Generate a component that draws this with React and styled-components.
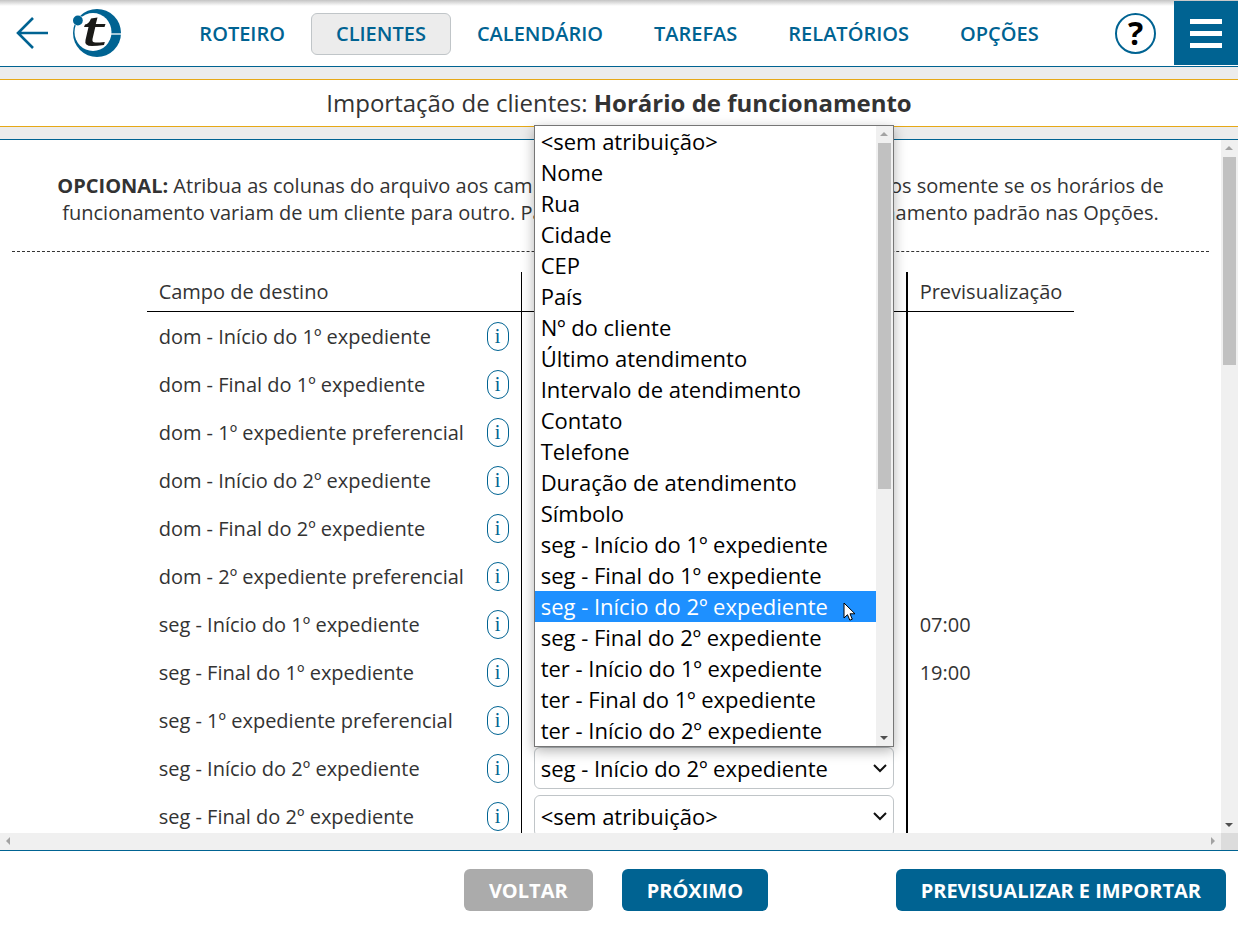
import styled, { createGlobalStyle } from 'styled-components';

const menu = ['ROTEIRO', 'CLIENTES', 'CALENDÁRIO', 'TAREFAS', 'RELATÓRIOS', 'OPÇÕES'];

const NONE = '<sem atribuição>';

const columns = [
  NONE,
  'Nome',
  'Rua',
  'Cidade',
  'CEP',
  'País',
  'Nº do cliente',
  'Último atendimento',
  'Intervalo de atendimento',
  'Contato',
  'Telefone',
  'Duração de atendimento',
  'Símbolo',
  'seg - Início do 1º expediente',
  'seg - Final do 1º expediente',
  'seg - Início do 2º expediente',
  'seg - Final do 2º expediente',
  'ter - Início do 1º expediente',
  'ter - Final do 1º expediente',
  'ter - Início do 2º expediente',
];

const fields = [
  { name: 'dom - Início do 1º expediente', value: NONE },
  { name: 'dom - Final do 1º expediente', value: NONE },
  { name: 'dom - 1º expediente preferencial', value: NONE },
  { name: 'dom - Início do 2º expediente', value: NONE },
  { name: 'dom - Final do 2º expediente', value: NONE },
  { name: 'dom - 2º expediente preferencial', value: NONE },
  { name: 'seg - Início do 1º expediente', value: 'seg - Início do 1º expediente', preview: '07:00' },
  { name: 'seg - Final do 1º expediente', value: 'seg - Final do 1º expediente', preview: '19:00' },
  { name: 'seg - 1º expediente preferencial', value: NONE },
  { name: 'seg - Início do 2º expediente', value: 'seg - Início do 2º expediente', open: true },
  { name: 'seg - Final do 2º expediente', value: NONE },
];

const Logo = () => (
  <svg width='48' height='48' viewBox='0 0 48 48' aria-hidden='true'>
    <circle cx='24' cy='24' r='24' fill='#006392' />
    <ellipse cx='20' cy='23' rx='18.500' ry='19' fill='#fff' />
    <path d='M38 25h10' stroke='#fff' strokeWidth='1.300' />
    <circle cx='5' cy='11.500' r='5.400' fill='#fff' />
    <circle cx='4.900' cy='11.500' r='4.900' fill='#006392' />
    <path
      fill='#1a1a18'
      d='M18 9.500l6.500-1l-1.700 6.500h9.700l-1 3h-9.200l-2.800 12q-.7 3.500 3 3.500q4 0 9.300-.5l-.8 3q-7 1-12 1q-8 0-6.500-6l3-13h-4.500l1-2.500q4-.5 6-6z'
    />
  </svg>
);

const App = () => {
  return (
    <Page>
      <GlobalStyle />
      <Header>
        <HeaderSide>
          <BackButton aria-label='Voltar à página anterior'>
            <svg width='34' height='34' viewBox='0 0 34 34' fill='none' stroke='#006392' strokeWidth='2.600'>
              <path d='M18 2L3 17l15 15M3 17h30' />
            </svg>
          </BackButton>
          <HomeLink href='#' aria-label='Início'>
            <Logo />
          </HomeLink>
        </HeaderSide>
        <Nav>
          {menu.map((item) => (
            <NavLink key={item} href='#' $active={item === 'CLIENTES'}>
              {item}
            </NavLink>
          ))}
        </Nav>
        <HeaderSide $end>
          <HelpButton>?</HelpButton>
          <MenuButton aria-label='Menu'>
            <span />
            <span />
            <span />
          </MenuButton>
        </HeaderSide>
      </Header>

      <Title>
        Importação de clientes: <strong>Horário de funcionamento</strong>
      </Title>

      <Main>
        <Content>
          <Intro>
            <strong>OPCIONAL:</strong> Atribua as colunas do arquivo aos campos de destino. Determine estes campos somente
            se os horários de funcionamento variam de um cliente para outro. Para isto, configure o horário de
            funcionamento padrão nas Opções.
          </Intro>
          <Table>
            <thead>
              <tr>
                <th>Campo de destino</th>
                <th>Coluna do arquivo</th>
                <th>Previsualização</th>
              </tr>
            </thead>
            <tbody>
              {fields.map((field, i) => (
                <tr key={field.name}>
                  <td>
                    <Field>
                      <label htmlFor={`field-${i}`}>{field.name}</label>
                      <InfoButton aria-label={`Informações: ${field.name}`}>i</InfoButton>
                    </Field>
                  </td>
                  <td>
                    {field.open && <Popup value={field.value} />}
                    <SelectBox>
                      <select id={`field-${i}`} defaultValue={field.value}>
                        {columns.map((column) => (
                          <option key={column}>{column}</option>
                        ))}
                      </select>
                      <svg width='14' height='9' viewBox='0 0 14 9' fill='none' stroke='#111' strokeWidth='2'>
                        <path d='M1 1l6 6l6-6' />
                      </svg>
                    </SelectBox>
                  </td>
                  <td>{field.preview}</td>
                </tr>
              ))}
            </tbody>
          </Table>
        </Content>
        <ScrollBar>
          <Arrow $dir='up' $muted />
          <Thumb $size={31.6} />
          <Arrow $dir='down' />
        </ScrollBar>
        <ScrollBar $horizontal>
          <Arrow $dir='left' $muted />
          <Arrow $dir='right' $muted />
        </ScrollBar>
        <Corner />
      </Main>

      <Footer>
        <Steps>
          <Button $muted>VOLTAR</Button>
          <Button>PRÓXIMO</Button>
        </Steps>
        <Button>PREVISUALIZAR E IMPORTAR</Button>
      </Footer>
    </Page>
  );
};

const Popup = ({ value }) => (
  <PopupBox>
    <ul role='listbox' aria-label='Coluna do arquivo'>
      {columns.map((column) => (
        <Option key={column} role='option' aria-selected={column === value} $active={column === value}>
          {column}
          {column === value && (
            <Cursor width='13' height='20' viewBox='0 0 13 20'>
              <path d='M1 1v15l3.500-3.300l2.300 5.500l2.500-1l-2.300-5.400h5z' fill='#fff' stroke='#000' />
            </Cursor>
          )}
        </Option>
      ))}
    </ul>
    <ScrollBar>
      <Arrow $dir='up' $muted />
      <Thumb $size={59} />
      <Arrow $dir='down' />
    </ScrollBar>
  </PopupBox>
);

const GlobalStyle = createGlobalStyle`
  * {
    box-sizing: border-box;
  }

  body {
    margin: 0;
    font-family: 'Open Sans', sans-serif;
    font-size: 20px;
    color: #333;
    background: #fff;
  }

  button,
  select {
    font-family: inherit;
    cursor: pointer;
  }
`;

const Page = styled.div`
  position: relative;
  display: flex;
  flex-direction: column;
  height: 100vh;
  background: #ececec;
`;

const Header = styled.header`
  display: flex;
  align-items: center;
  height: 67px;
  border-bottom: 1px solid #006392;
  background: linear-gradient(#c4c4c4, #fff 6px);
`;

const HeaderSide = styled.div`
  flex: 1 1 0;
  display: flex;
  align-items: center;
  justify-content: ${({ $end }) => ($end ? 'flex-end' : 'flex-start')};
  gap: ${({ $end }) => ($end ? '18px' : '24px')};
`;

const BackButton = styled.button`
  display: flex;
  margin-left: 15px;
  padding: 0;
  border: none;
  background: none;
`;

const HomeLink = styled.a`
  display: flex;
`;

const Nav = styled.nav`
  display: flex;
  gap: 1px;
  padding-top: 2px;
`;

const NavLink = styled.a`
  padding: 0 24px;
  border: 1px solid ${({ $active }) => ($active ? '#c0c5c8' : 'transparent')};
  border-radius: 6px;
  background: ${({ $active }) => ($active ? '#ececec' : 'transparent')};
  color: #006392;
  font-weight: 600;
  line-height: 40px;
  text-decoration: none;
`;

const HelpButton = styled.button`
  width: 41px;
  height: 41px;
  padding: 0;
  border: 2px solid #006392;
  border-radius: 50%;
  background: #fff;
  color: #000;
  font-size: 32px;
  font-weight: 700;
  line-height: 36px;
`;

const MenuButton = styled.button`
  display: flex;
  flex-direction: column;
  align-items: center;
  justify-content: center;
  gap: 7px;
  width: 64px;
  height: 64px;
  padding: 0;
  border: none;
  background: #006392;

  span {
    width: 32px;
    height: 5px;
    background: #fff;
  }
`;

const Title = styled.h1`
  margin: 12px 0;
  border: solid #e6a817;
  border-width: 1px 0;
  background: #fff;
  font-size: 24px;
  font-weight: 400;
  line-height: 46px;
  text-align: center;

  strong {
    font-weight: 700;
  }
`;

const Main = styled.main`
  flex: 1;
  min-height: 0;
  display: grid;
  grid-template: minmax(0, 1fr) 17px / minmax(0, 1fr) 17px;
  border: solid #006392;
  border-width: 1px 0;
`;

const Content = styled.div`
  overflow: hidden;
  padding: 0 12px;
  background: #fff;
`;

const Intro = styled.p`
  margin: 0 0 20px;
  padding: 32px 40px 25px;
  border-bottom: 1px dashed #333;
  line-height: 27px;
  text-align: center;
`;

const Table = styled.table`
  margin: 0 auto;
  border-spacing: 0;

  th {
    height: 40px;
    padding: 0 12px;
    border-bottom: 1px solid #000;
    font-weight: 400;
    text-align: left;
  }

  td {
    height: 48px;
    padding: 0 12px;
  }

  th:nth-child(1),
  td:nth-child(1) {
    width: 375px;
    border-right: 1px solid #000;
  }

  th:nth-child(2),
  td:nth-child(2) {
    width: 386px;
    border-right: 2px solid #000;
  }
`;

const Field = styled.div`
  display: flex;
  align-items: center;
  justify-content: space-between;
`;

const InfoButton = styled.button`
  width: 22px;
  height: 29px;
  padding: 0;
  border: 1px solid #006392;
  border-radius: 11px;
  background: none;
  color: #006392;
  font-family: 'Liberation Serif', serif;
  font-size: 20px;
`;

const SelectBox = styled.div`
  display: flex;
  align-items: center;
  height: 42px;
  border: 1px solid #c0c5c8;
  border-radius: 6px;

  select {
    flex: 1;
    height: 40px;
    margin-right: -20px;
    padding: 0 26px 0 6px;
    border: none;
    background: none;
    color: #000;
    font-size: 22px;
    appearance: none;
  }

  svg {
    margin-right: 6px;
    pointer-events: none;
  }
`;

/* sits right above its select, outside of the clipped content */
const PopupBox = styled.div`
  position: absolute;
  z-index: 1;
  display: flex;
  width: 360px;
  border: 1px solid #767676;
  background: #fff;
  box-shadow: 0 4px 12px rgba(0, 0, 0, 0.3);
  transform: translateY(-100%);

  ul {
    flex: 1;
    margin: 0;
    padding: 0;
    list-style: none;
  }
`;

const Option = styled.li`
  position: relative;
  padding-left: 6px;
  background: ${({ $active }) => ($active ? '#1e90ff' : '#fff')};
  color: ${({ $active }) => ($active ? '#fff' : '#000')};
  font-size: 22px;
  line-height: 31px;
`;

const Cursor = styled.svg`
  position: absolute;
  top: 11px;
  right: 20px;
`;

const ScrollBar = styled.div`
  display: flex;
  flex-direction: ${({ $horizontal }) => ($horizontal ? 'row' : 'column')};
  align-items: center;
  min-width: 17px;
  background: #f0f0f0;
`;

const Thumb = styled.div`
  width: 13px;
  height: calc((100% - 34px) * ${({ $size }) => $size / 100});
  background: #c1c1c1;

  & + * {
    margin-top: auto;
  }
`;

const arrows = {
  up: 'M8 6l4 4H4z',
  down: 'M8 11l4-4H4z',
  left: 'M6 8l4-4v8z',
  right: 'M11 8l-4-4v8z',
};

const Arrow = ({ $dir, $muted }) => (
  <ArrowIcon $end={$dir === 'right'} width='17' height='17' viewBox='0 0 17 17'>
    <path d={arrows[$dir]} fill={$muted ? '#a3a3a3' : '#505050'} />
  </ArrowIcon>
);

const ArrowIcon = styled.svg`
  flex-shrink: 0;
  margin-left: ${({ $end }) => ($end ? 'auto' : '0')};
`;

const Corner = styled.div`
  background: #dcdcdc;
`;

const Footer = styled.footer`
  display: grid;
  grid-template-columns: 1fr auto 1fr;
  align-items: center;
  height: 78px;
  padding: 0 12px;
  background: #fff;

  > :last-child {
    justify-self: end;
  }
`;

const Steps = styled.div`
  grid-column: 2;
  display: flex;
  gap: 29px;
  padding-right: 6px;
`;

const Button = styled.button`
  height: 42px;
  padding: 0 25px;
  border: none;
  border-radius: 6px;
  background: ${({ $muted }) => ($muted ? '#ababab' : '#006392')};
  color: #fff;
  font-size: 20px;
  font-weight: 700;
`;

export default App;
